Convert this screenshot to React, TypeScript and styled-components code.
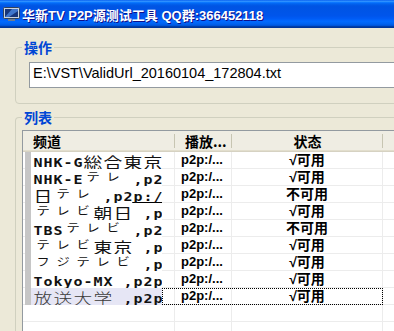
import React from 'react'
import styled, { createGlobalStyle, css } from 'styled-components'

const GlobalStyle = createGlobalStyle`
  html, body {
    margin: 0;
    padding: 0;
    background: #ece9d8;
  }
`

const COLUMNS = '152px 57px 151px 1fr'

const Viewport = styled.div`
  width: 394px;
  height: 331px;
  overflow: hidden;
`

const Window = styled.div`
  width: 420px;
  height: 331px;
  display: flex;
  flex-direction: column;
  background: #ece9d8;
  font-family: 'Liberation Sans', 'Noto Sans CJK SC', sans-serif;
`

const TitleBar = styled.div`
  flex: none;
  height: 28px;
  display: flex;
  align-items: center;
  gap: 2px;
  padding-left: 3px;
  background: linear-gradient(
    to bottom,
    #0058ee 0%,
    #3593ff 4%,
    #288eff 6%,
    #127dff 8%,
    #036ffc 10%,
    #0262ee 14%,
    #0057e5 20%,
    #0054e3 24%,
    #0055eb 56%,
    #005bf5 66%,
    #026afe 76%,
    #0062ef 86%,
    #0052d6 92%,
    #0040ab 94%,
    #003092 100%
  );
`

const TitleText = styled.span`
  color: #fff;
  font-weight: bold;
  font-size: 13px;
  white-space: nowrap;
  text-shadow: 1px 1px #0f1089;
`

const Body = styled.div`
  flex: 1;
  display: flex;
  flex-direction: column;
  gap: 5px;
  padding: 11px 0 0 15px;
  min-height: 0;
`

const GroupBox = styled.fieldset<{ $grow?: boolean }>`
  margin: 0;
  min-width: 0;
  border: 1px solid #d0d0bf;
  border-radius: 4px;
  ${p =>
    p.$grow
      ? css`
          flex: 1;
          display: flex;
          flex-direction: column;
          padding: 5px 0 0 6px;
          border-bottom: none;
          border-radius: 4px 4px 0 0;
        `
      : css`
          padding: 7px 0 15px 13px;
        `}
`

// the legend sits at the box's content edge, so pull it back to a fixed 7px inset
const Legend = styled.legend<{ $pull: number }>`
  margin-left: ${p => -p.$pull}px;
  padding: 0 2px;
  color: #0046d5;
  font-family: 'Noto Sans CJK SC', sans-serif;
  font-weight: bold;
  font-size: 14px;
  line-height: 16px;
`

const PathInput = styled.input`
  display: block;
  width: 100%;
  height: 26px;
  box-sizing: border-box;
  margin: 0;
  border: 1px solid #939aa0;
  padding: 0 0 5px 3px;
  background: #fff;
  color: #000;
  font-family: 'Liberation Sans', sans-serif;
  font-size: 14.5px;
  outline: none;
`

const ListView = styled.div`
  flex: 1;
  border: 1px solid #939aa0;
  border-bottom: none;
  background: #fff;
  overflow: hidden;
`

const HeaderRow = styled.div`
  display: grid;
  grid-template-columns: ${COLUMNS};
  height: 20px;
  background: #efede3;
  border-bottom: 1px solid #d6d2c2;
  box-shadow: inset 0 -1px #e2decd;
`

const HeadCell = styled.div<{ $center?: boolean }>`
  position: relative;
  padding-left: ${p => (p.$center ? 0 : 10)}px;
  text-align: ${p => (p.$center ? 'center' : 'left')};
  font-family: 'Noto Sans CJK SC', sans-serif;
  font-weight: bold;
  font-size: 14px;
  line-height: 20px;
  color: #000;
  white-space: nowrap;

  &::after {
    content: '';
    position: absolute;
    right: 0;
    top: 3px;
    bottom: 3px;
    width: 1px;
    background: #c7c5b2;
  }
`

const Row = styled.div`
  position: relative;
  display: grid;
  grid-template-columns: ${COLUMNS};
  height: 17px;
`

const NameCell = styled.div`
  display: flex;
  min-width: 0;
`

const Lead = styled.div`
  width: 2px;
  flex: none;
  border-bottom: 1px solid #ececec;
`

const Strip = styled.div`
  width: 6px;
  flex: none;
  background: #c6c6c6;
`

const Picture = styled.div<{ $selected?: boolean }>`
  width: 131px;
  flex: none;
  display: flex;
  overflow: hidden;
  background: ${p => (p.$selected ? '#e6e6f5' : '#fff')};
  padding-left: 2px;
  box-sizing: border-box;
`

const Tail = styled.div`
  flex: 1;
  border-bottom: 1px solid #ececec;
  border-right: 1px solid #ececec;
`

const Cell = styled.div<{ $center?: boolean }>`
  border-bottom: 1px solid #ececec;
  border-right: 1px solid #ececec;
  padding-left: ${p => (p.$center ? 0 : 6)}px;
  text-align: ${p => (p.$center ? 'center' : 'left')};
  font-family: 'Liberation Sans', 'Noto Sans CJK SC', sans-serif;
  font-weight: bold;
  font-size: ${p => (p.$center ? 14 : 13)}px;
  line-height: 16px;
  white-space: nowrap;
  overflow: hidden;
  color: #000;
`

const FocusRect = styled.div`
  position: absolute;
  left: 139px;
  top: 0;
  width: 221px;
  height: 17px;
  box-sizing: border-box;
  border: 1px dotted #000;
  pointer-events: none;
`

type Kind = 'latin' | 'kana' | 'kanji'

const kindOf = (ch: string): Kind =>
  /[\u30a0-\u30ff]/.test(ch) ? 'kana' : ch.charCodeAt(0) > 0x2e80 ? 'kanji' : 'latin'

const Glyph = styled.span<{ $kind: Kind; $faint?: boolean; $under?: boolean }>`
  flex: none;
  display: block;
  box-sizing: border-box;
  width: ${p => (p.$kind === 'latin' ? 10 : 20)}px;
  height: 17px;
  text-align: center;
  white-space: pre;
  color: #111;
  ${p => p.$under && 'box-shadow: inset 0 -1px #000;'}
  ${p =>
    p.$kind === 'latin' &&
    css`
      font-family: 'DejaVu Sans Mono', monospace;
      font-weight: bold;
      font-size: 13px;
      line-height: 13px;
      padding-top: 4px;
      transform: scaleX(1.15);
    `}
  ${p =>
    p.$kind === 'kana' &&
    css`
      font-family: 'Noto Sans CJK JP', sans-serif;
      font-size: 11px;
      line-height: 11px;
      padding-top: 2px;
      transform: scaleX(1.2);
    `}
  ${p =>
    p.$kind === 'kanji' &&
    css`
      font-family: 'Noto Sans CJK JP', sans-serif;
      font-size: 15px;
      line-height: 15px;
      padding-top: 2px;
      font-weight: ${p.$faint ? 300 : 400};
      color: ${p.$faint ? '#3a3a3a' : '#111'};
      transform: scaleX(1.25);
    `}
`

type Channel = { name: string; ok: boolean; underlineFrom?: number; selected?: boolean }

const channels: Channel[] = [
  { name: 'NHK-G総合東京,p2p', ok: true },
  { name: 'NHK-Eテレ ,p2p', ok: true },
  { name: '日テレ ,p2p:/', ok: false, underlineFrom: 7 },
  { name: 'テレビ朝日 ,p', ok: true },
  { name: 'TBSテレビ ,p2', ok: false },
  { name: 'テレビ東京 ,p', ok: true },
  { name: 'フジテレビ ,p', ok: true },
  { name: 'Tokyo-MX ,p2p', ok: true },
  { name: '放送大学 ,p2p', ok: true, selected: true },
]

function TvIcon() {
  return (
    <svg width="17" height="14" viewBox="0 0 17 14">
      <rect x="0.5" y="0.5" width="16" height="11" rx="1" fill="#c9d3e0" stroke="#33445c" />
      <rect x="2" y="2" width="13" height="8" fill="#17357a" />
      <path d="M2 10 L9 2 H15 V4 L6 10 Z" fill="#4a86e0" opacity="0.8" />
      <rect x="5" y="12" width="7" height="2" fill="#6d7c90" />
    </svg>
  )
}

function ChannelPicture({ channel }: { channel: Channel }) {
  const chars = Array.from(channel.name)
  return (
    <Picture $selected={channel.selected}>
      {chars.map((ch, i) => (
        <Glyph
          key={i}
          $kind={kindOf(ch)}
          $faint={channel.selected}
          $under={channel.underlineFrom !== undefined && i >= channel.underlineFrom}
        >
          {ch}
        </Glyph>
      ))}
    </Picture>
  )
}

export default function App() {
  return (
    <Viewport>
      <GlobalStyle />
      <Window>
        <TitleBar>
          <TvIcon />
          <TitleText>华新TV P2P源测试工具 QQ群:366452118</TitleText>
        </TitleBar>

        <Body>
          <GroupBox>
            <Legend $pull={7}>操作</Legend>
            <PathInput readOnly value="E:\VST\ValidUrl_20160104_172804.txt" />
          </GroupBox>

          <GroupBox $grow>
            <Legend $pull={0}>列表</Legend>
            <ListView>
              <HeaderRow>
                <HeadCell>频道</HeadCell>
                <HeadCell>播放...</HeadCell>
                <HeadCell $center>状态</HeadCell>
                <HeadCell />
              </HeaderRow>

              {channels.map(channel => (
                <Row key={channel.name}>
                  <NameCell>
                    <Lead />
                    <Strip />
                    <ChannelPicture channel={channel} />
                    <Tail />
                  </NameCell>
                  <Cell>p2p:/...</Cell>
                  <Cell $center>{channel.ok ? '√可用' : '不可用'}</Cell>
                  <Cell />
                  {channel.selected && <FocusRect />}
                </Row>
              ))}

              {[0, 1].map(i => (
                <Row key={`empty-${i}`}>
                  <Cell />
                  <Cell />
                  <Cell />
                  <Cell />
                </Row>
              ))}
            </ListView>
          </GroupBox>
        </Body>
      </Window>
    </Viewport>
  )
}
